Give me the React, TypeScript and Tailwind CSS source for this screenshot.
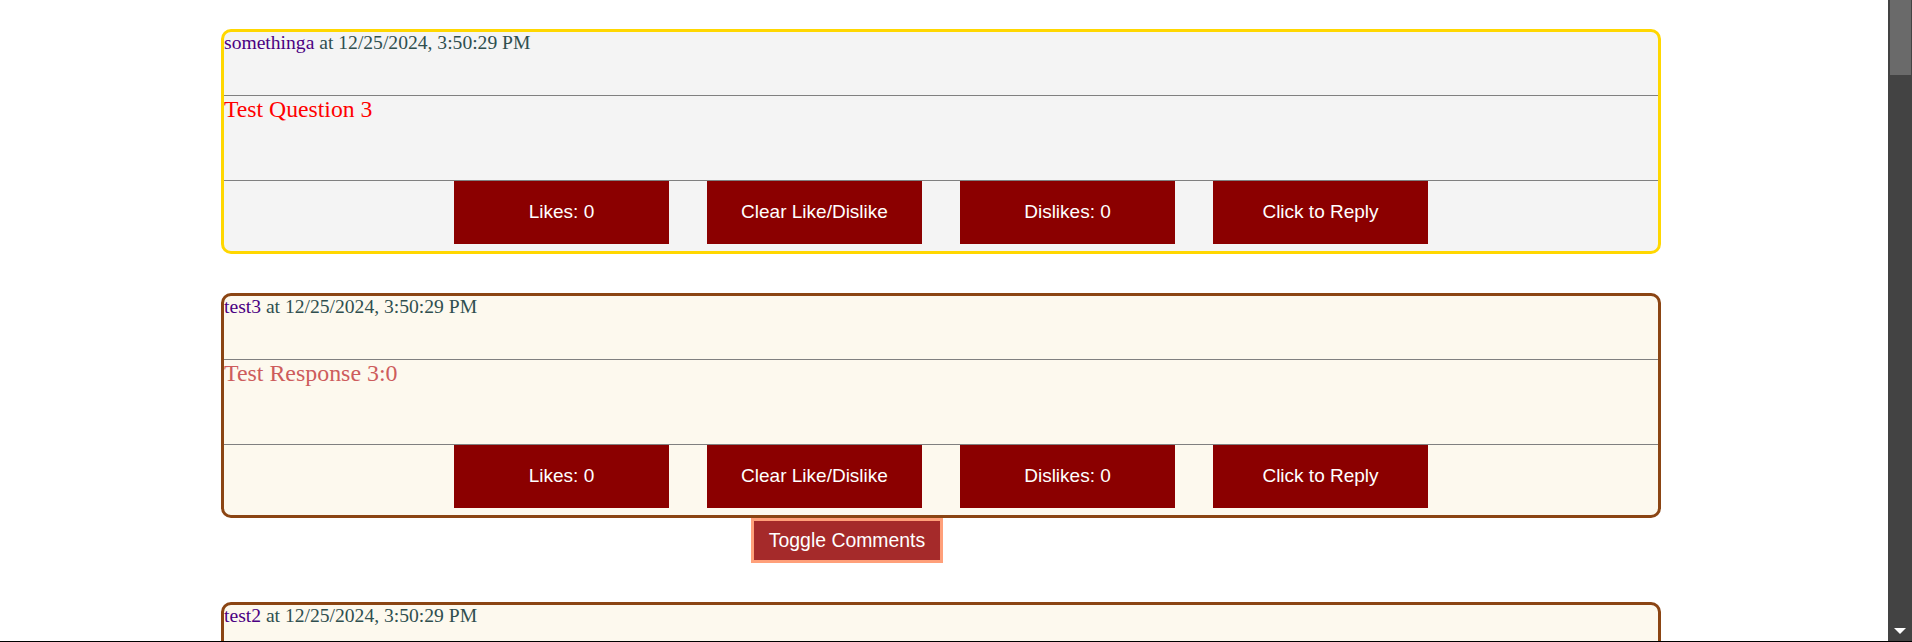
import React from "react";

type Post = {
  user: string;
  time: string;
  text: string;
  kind: "question" | "response";
  toggle?: boolean;
};

const posts: Post[] = [
  { user: "somethinga", time: "12/25/2024, 3:50:29 PM", text: "Test Question 3", kind: "question" },
  { user: "test3", time: "12/25/2024, 3:50:29 PM", text: "Test Response 3:0", kind: "response", toggle: true },
  { user: "test2", time: "12/25/2024, 3:50:29 PM", text: "Test Response 3:1", kind: "response" },
];

const actions = ["Likes: 0", "Clear Like/Dislike", "Dislikes: 0", "Click to Reply"];

function PostCard({ post }: { post: Post }) {
  const isQuestion = post.kind === "question";
  return (
    <div
      className={
        isQuestion
          ? "w-[1440px] shrink-0 overflow-hidden rounded-[10px] border-[3px] border-[#ffd700] bg-[#f4f4f4]"
          : "w-[1440px] shrink-0 overflow-hidden rounded-[10px] border-[3px] border-[#8b4513] bg-[#fdf9ee]"
      }
    >
      <div className="h-[64px] border-b border-[#808080] text-[19.6px] leading-[1.107] text-[#2f4f4f]">
        <span className="text-[#4b0082]">{post.user}</span> at {post.time}
      </div>
      <div
        className={
          isQuestion
            ? "h-[85px] border-b border-[#808080] text-[23.7px] leading-[1.107] text-[#ff0000]"
            : "h-[85px] border-b border-[#808080] text-[23.9px] leading-[1.107] text-[#cd5c5c]"
        }
      >
        {post.text}
      </div>
      <div className="flex h-[70px] items-start justify-center gap-[38px]">
        {actions.map((a) => (
          <button
            key={a}
            className="flex h-[63px] w-[215px] items-center justify-center bg-[#8b0000] font-['Liberation_Sans',Arial,sans-serif] text-[19px] text-white"
          >
            {a}
          </button>
        ))}
      </div>
    </div>
  );
}

export default function App() {
  return (
    <div className="flex h-[642px] flex-col overflow-hidden bg-white">
      <div className="flex h-[641px] min-h-0">
        <main className="min-w-0 flex-1 overflow-hidden bg-white pl-[221px] pt-[29px] font-['Liberation_Serif','Times_New_Roman',serif]">
          <div className="flex flex-col">
            {posts.map((p, i) => (
              <div key={i} className={i === 0 ? "flex flex-col" : "mt-[39px] flex flex-col"}>
                <PostCard post={p} />
                {p.toggle && (
                  <button className="ml-[530px] flex h-[45px] w-[192px] items-center justify-center border-[3px] border-[#ffa07a] bg-[#a52a2a] font-['Liberation_Sans',Arial,sans-serif] text-[19.4px] text-white">
                    Toggle Comments
                  </button>
                )}
              </div>
            ))}
          </div>
        </main>
        <div className="flex w-[24px] shrink-0 flex-col bg-[#434343]">
          <div className="ml-[2px] h-[75px] w-[21px] bg-[#6a6a6a]" />
          <div className="flex-1" />
          <div className="flex h-[20px] items-center justify-center">
            <svg width="12" height="7" viewBox="0 0 12 7">
              <path d="M0 0 L12 0 L6 6 Z" fill="#ffffff" />
            </svg>
          </div>
        </div>
      </div>
      <div className="h-px bg-black" />
    </div>
  );
}
